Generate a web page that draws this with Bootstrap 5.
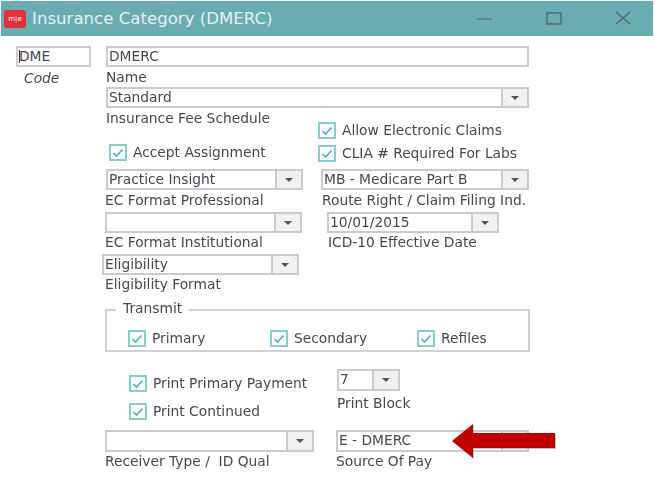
<!DOCTYPE html>
<html lang="en"><head><meta charset="utf-8"><title>Insurance Category (DMERC)</title>
<link href="https://cdn.jsdelivr.net/npm/bootstrap@5.3.0/dist/css/bootstrap.min.css" rel="stylesheet">
<style>
html,body{margin:0;background:#fff;width:655px;height:478px;overflow:hidden}
body{font-family:"DejaVu Sans",sans-serif;font-size:13.8px;color:#474752;line-height:15px}
.stage{position:relative;width:655px;height:478px;filter:blur(.4px)}
.tbar{height:35px;margin:1px 2px 0 1px;background:#69adb2;color:#e4f0f1}
.appicon{width:22px;height:18px;margin-left:3px;background:#e5303a;border-radius:3px;color:#fff;font-size:7px;line-height:18px;text-align:center}
.ttl{font-size:16.6px;margin-left:6px}
.winbtns{margin-left:auto;gap:53px;margin-right:22px}
.sec-top{margin-top:10px}
.c-code{width:106px;padding-left:16px}
.c-main{width:423px}
.box{border:2px solid #cbcbcb;height:21px;background:#fff;line-height:17px;padding-left:1px;color:#474752;white-space:nowrap}
.w-code{width:75px;padding-left:1px;position:relative}
.w-code::before{content:"";position:absolute;left:1px;top:2px;width:1px;height:13px;background:#333}
.code-cap{font-style:italic;margin:4px 0 0 8px}
.cap{margin-top:3px;height:17px;white-space:nowrap}
.cap-last{height:11px}
.combo-btn{flex:0 0 26px;margin-left:auto;border-left:2px solid #cbcbcb;background:#f1f1f1;display:flex;align-items:center;justify-content:center}
.combo-btn::after{content:"";border:4px solid transparent;border-top:4px solid #555;border-bottom:0}
.chk{display:flex;align-items:center;white-space:nowrap;height:16px}
.chk svg{flex:none;margin-right:6px}
.col-l{width:318px}
.col-r{width:212px}
.ck-accept{margin:22px 0 0 109px}
.cb-pi{margin:9px 0 0 106px;width:197px}
.cap-pi{margin-left:105px}
.cb-blank{margin:2px 0 0 105px;width:197px}
.cb-elig{margin:2px 0 0 102px;width:197px}
.cap-tight{margin-top:2px}
.ck-clia{margin-top:7px}
.cb-mb{margin:8px 0 0 3px;width:208px}
.cap-mb{margin-left:4px}
.cb-date{margin:2px 0 0 9px;width:172px}
.cap-date{margin-left:10px}
.transmit{margin:15px 0 0 105px;width:425px;height:43px;border:2px solid #d2d2d2;position:relative}
.transmit legend{position:absolute;float:none;width:auto;left:9px;top:-10px;padding:0 7px;margin:0;background:#fff;font-size:13.8px;line-height:15px}
.tr-1{position:absolute;left:21px;top:19px}
.tr-2{position:absolute;left:163px;top:19px}
.tr-3{position:absolute;left:310px;top:19px}
.sec-print{margin-top:17px}
.c-print{width:337px;padding-left:129px;padding-top:6px}
.ck-cont{margin-top:12px}
.cb-blk{width:63px;height:22px}
.cap-blk{margin-top:5px}
.sec-bot{margin-top:11px}
.c-recv{width:336px;padding-left:105px}
.cb-recv{width:209px;height:22px}
.cb-src{width:193px;height:22px}
.cap-bot{margin-top:2px}
.arrow{position:absolute;left:448px;top:420px}
</style></head>
<body>
<svg width="0" height="0" class="d-block position-absolute"><symbol id="ck" viewBox="0 0 18 17"><rect x="1" y="1" width="16" height="15" fill="#fff" stroke="#8ccbcb" stroke-width="2"/><path d="M4.5 9l3 3 6-6.5" fill="none" stroke="#55afb0" stroke-width="1.7"/></symbol></svg>
<div class="stage">
  <div class="tbar d-flex align-items-center">
    <div class="appicon">m|e</div>
    <div class="ttl">Insurance Category (DMERC)</div>
    <div class="winbtns d-flex align-items-center">
      <svg width="16" height="16" viewBox="0 0 16 16"><path d="M0 8h15" stroke="#66767a" stroke-width="1.4"/></svg>
      <svg width="16" height="16" viewBox="0 0 16 16"><rect x="1" y="2" width="14" height="11" fill="none" stroke="#56686c" stroke-width="1.4"/></svg>
      <svg width="16" height="16" viewBox="0 0 16 16"><path d="M1 1l14 12M15 1L1 13" stroke="#56686c" stroke-width="1.3"/></svg>
    </div>
  </div>
  <div class="sec-top d-flex">
    <div class="c-code">
      <div class="box w-code">DME</div>
      <div class="code-cap">Code</div>
    </div>
    <div class="c-main">
      <div class="box">DMERC</div>
      <div class="cap">Name</div>
      <div class="box d-flex"><span>Standard</span><span class="combo-btn"></span></div>
      <div class="cap cap-last">Insurance Fee Schedule</div>
    </div>
  </div>
  <div class="d-flex">
    <div class="col-l">
      <div class="chk ck-accept"><svg width="18" height="17"><use href="#ck"/></svg>Accept Assignment</div>
      <div class="box d-flex cb-pi"><span>Practice Insight</span><span class="combo-btn"></span></div>
      <div class="cap cap-pi">EC Format Professional</div>
      <div class="box d-flex cb-blank"><span></span><span class="combo-btn"></span></div>
      <div class="cap cap-pi cap-tight">EC Format Institutional</div>
      <div class="box d-flex cb-elig"><span>Eligibility</span><span class="combo-btn"></span></div>
      <div class="cap cap-pi cap-tight">Eligibility Format</div>
    </div>
    <div class="col-r">
      <div class="chk"><svg width="18" height="17"><use href="#ck"/></svg>Allow Electronic Claims</div>
      <div class="chk ck-clia"><svg width="18" height="17"><use href="#ck"/></svg>CLIA # Required For Labs</div>
      <div class="box d-flex cb-mb"><span>MB - Medicare Part B</span><span class="combo-btn"></span></div>
      <div class="cap cap-mb">Route Right / Claim Filing Ind.</div>
      <div class="box d-flex cb-date"><span>10/01/2015</span><span class="combo-btn"></span></div>
      <div class="cap cap-date cap-tight">ICD-10 Effective Date</div>
    </div>
  </div>
  <fieldset class="transmit">
    <legend>Transmit</legend>
    <div class="chk tr-1"><svg width="18" height="17"><use href="#ck"/></svg>Primary</div>
    <div class="chk tr-2"><svg width="18" height="17"><use href="#ck"/></svg>Secondary</div>
    <div class="chk tr-3"><svg width="18" height="17"><use href="#ck"/></svg>Refiles</div>
  </fieldset>
  <div class="sec-print d-flex">
    <div class="c-print">
      <div class="chk"><svg width="18" height="17"><use href="#ck"/></svg>Print Primary Payment</div>
      <div class="chk ck-cont"><svg width="18" height="17"><use href="#ck"/></svg>Print Continued</div>
    </div>
    <div>
      <div class="box d-flex cb-blk"><span>7</span><span class="combo-btn"></span></div>
      <div class="cap cap-blk">Print Block</div>
    </div>
  </div>
  <div class="sec-bot d-flex">
    <div class="c-recv">
      <div class="box d-flex cb-recv"><span></span><span class="combo-btn"></span></div>
      <div class="cap cap-bot">Receiver Type /&nbsp; ID Qual</div>
    </div>
    <div>
      <div class="box d-flex cb-src"><span>E - DMERC</span><span class="combo-btn"></span></div>
      <div class="cap cap-bot">Source Of Pay</div>
    </div>
  </div>
  <svg class="arrow" width="112" height="42" viewBox="0 0 112 42"><path d="M4 20L25 3v9h82v15H25v10z" fill="#6b8f92" opacity=".5" transform="translate(1 1)"/><path d="M4 20L25 3v9h82v15H25v10z" fill="#c00000"/></svg>
</div>
<script src="https://cdn.jsdelivr.net/npm/bootstrap@5.3.0/dist/js/bootstrap.bundle.min.js"></script>
</body></html>
